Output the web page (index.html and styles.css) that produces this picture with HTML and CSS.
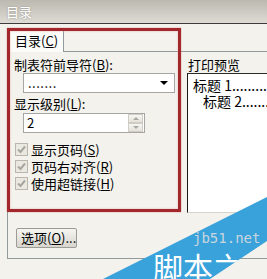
FILE: index.html
```html
<!DOCTYPE html>
<html lang="zh-CN">
<head>
    <meta charset="UTF-8">
    <title>目录</title>
    <link rel="stylesheet" href="styles.css">
</head>
<body>
<div class="window">
    <div class="titlebar">目录</div>
    <div class="client">
        <div class="tabs">
            <div class="tab">目录(<u>C</u>)</div>
            <div class="tabFill"></div>
        </div>
        <div class="panel">
            <div class="columns">
                <div class="left">
                    <div class="label">制表符前导符(<u>B</u>):</div>
                    <div class="combo">
                        <span class="comboText">.......</span>
                        <span class="comboArrow"></span>
                    </div>
                    <div class="label label2">显示级别(<u>L</u>):</div>
                    <div class="spin">
                        <span class="spinText">2</span>
                        <span class="spinBtns">
                            <span class="spinBtn"><i class="up"></i></span>
                            <span class="spinBtn"><i class="down"></i></span>
                        </span>
                    </div>
                    <div class="checks">
                        <div class="check"><span class="box"><svg width="11" height="11" viewBox="0 0 11 11"><path d="M2 5.5 L4.5 8 L9 2.5" fill="none" stroke="#a7a79f" stroke-width="2"/></svg></span>显示页码(<u>S</u>)</div>
                        <div class="check"><span class="box"><svg width="11" height="11" viewBox="0 0 11 11"><path d="M2 5.5 L4.5 8 L9 2.5" fill="none" stroke="#a7a79f" stroke-width="2"/></svg></span>页码右对齐(<u>R</u>)</div>
                        <div class="check"><span class="box"><svg width="11" height="11" viewBox="0 0 11 11"><path d="M2 5.5 L4.5 8 L9 2.5" fill="none" stroke="#a7a79f" stroke-width="2"/></svg></span>使用超链接(<u>H</u>)</div>
                    </div>
                </div>
                <div class="right">
                    <div class="label">打印预览</div>
                    <div class="preview">
                        <div class="lv1">标题 1..........</div>
                        <div class="lv2">标题 2..........</div>
                    </div>
                </div>
            </div>
            <div class="footer">
                <div class="button">选项(<u>O</u>)...</div>
            </div>
        </div>
    </div>
    <!-- 红色标注框 -->
    <div class="highlight"></div>
    <!-- 水印 -->
    <svg class="watermark" width="267" height="279" viewBox="0 0 267 279">
        <defs>
            <clipPath id="band"><polygon points="103,279 267,197 267,241 210,279"/></clipPath>
        </defs>
        <polygon points="103,279 267,197 267,241 210,279" fill="#3aa2da"/>
        <text x="193" y="243" class="wmSite">jb51.net</text>
        <text x="153" y="279" class="wmName" clip-path="url(#band)">脚本之</text>
    </svg>
</div>
</body>
</html>
```

FILE: styles.css
```css
* {
    margin: 0;
    padding: 0;
    box-sizing: border-box;
}
body {
    background-color: #f3f2ed;
    font-family: "Noto Sans CJK SC", "Noto Sans", sans-serif;
    font-size: 13px;
    color: #000;
}
u {
    text-decoration-thickness: 1px;
    text-underline-offset: 1px;
}
.window {
    width: 267px;
    height: 279px;
    overflow: hidden;
    position: relative;
    background-color: #f3f2ed;
}
.titlebar {
    height: 24px;
    line-height: 24px;
    padding-left: 6px;
    font-size: 13px;
    color: #fff;
    text-shadow: 0 0 2px #8c8a84;
    background: linear-gradient(#bcb9b0, #dddbd4);
    border-bottom: 1px solid #3c3c3c;
}
.client {
    padding: 5px 0 0 7px;
}
.tabs {
    display: flex;
    height: 23px;
}
.tab {
    width: 56px;
    margin-left: 1px;
    padding-left: 6px;
    line-height: 21px;
    background-color: #fbfbf9;
    border: 1px solid #919b9c;
    border-bottom: none;
}
.tabFill {
    flex: 1;
    border-bottom: 1px solid #919b9c;
}
.panel {
    height: 207px;
    border-left: 1px solid #919b9c;
    border-bottom: 1px solid #919b9c;
}
.columns {
    display: flex;
}
.left {
    flex-shrink: 0;
    width: 179px;
    padding: 5px 0 0 6px;
}
.label {
    line-height: 15px;
    height: 15px;
    white-space: nowrap;
}
.label2 {
    margin-top: 3px;
}
.combo {
    display: flex;
    align-items: center;
    justify-content: space-between;
    width: 152px;
    height: 20px;
    margin: 1px 0 0 9px;
    padding: 0 6px 0 4px;
    background-color: #fff;
    border: 1px solid #a6a6a6;
}
.comboText {
    letter-spacing: 0.5px;
    line-height: 14px;
}
.comboArrow {
    width: 0;
    height: 0;
    border-left: 4px solid transparent;
    border-right: 4px solid transparent;
    border-top: 4px solid #000;
}
.spin {
    display: flex;
    justify-content: space-between;
    width: 122px;
    height: 20px;
    margin: 2px 0 0 9px;
    padding: 0 1px 0 3px;
    background-color: #fff;
    border: 1px solid #a6a6a6;
}
.spinText {
    line-height: 18px;
}
.spinBtns {
    display: flex;
    flex-direction: column;
    width: 15px;
}
.spinBtn {
    flex: 1;
    display: flex;
    align-items: center;
    justify-content: center;
    background: linear-gradient(#f7f6f2, #e4e2da);
    border: 1px solid #cfcdc4;
}
.spinBtn i {
    width: 0;
    height: 0;
    border-left: 3px solid transparent;
    border-right: 3px solid transparent;
}
.spinBtn .up {
    border-bottom: 3px solid #a9a9a4;
}
.spinBtn .down {
    border-top: 3px solid #a9a9a4;
}
.checks {
    margin-top: 8px;
}
.check {
    display: flex;
    align-items: center;
    height: 17px;
    line-height: 15px;
    padding-left: 1px;
    white-space: nowrap;
}
.box {
    display: flex;
    align-items: center;
    justify-content: center;
    width: 13px;
    height: 13px;
    margin-right: 3px;
    background-color: #e9e8e1;
    border: 1px solid #b9b7ad;
}
.right {
    flex: 1;
    min-width: 0;
    padding-top: 5px;
}
.right .label {
    padding-left: 1px;
}
.preview {
    width: 100px;
    height: 140px;
    margin-top: 1px;
    padding: 3px 0 0 5px;
    background-color: #fff;
    border-top: 1px solid #2a2a2a;
    border-left: 1px solid #1a1a1a;
    border-bottom: 1px solid #d6d4cc;
    font-size: 14px;
    line-height: 16px;
    white-space: nowrap;
    overflow: hidden;
}
.lv2 {
    padding-left: 10px;
}
.footer {
    margin-top: 15px;
    padding-left: 8px;
}
.button {
    width: 61px;
    height: 20px;
    padding-left: 4px;
    line-height: 18px;
    white-space: nowrap;
    overflow: hidden;
    background: linear-gradient(#f6f5f1, #d7d5cd);
    border: 1px solid #9c9b95;
    border-radius: 2px;
}
.highlight {
    position: absolute;
    left: 7px;
    top: 28px;
    width: 174px;
    height: 184px;
    border: 3px solid #a3282c;
    box-shadow: inset 0 0 2px #e6a7a7, 0 0 1px #c46060;
}
.watermark {
    position: absolute;
    left: 0;
    top: 0;
}
.wmSite {
    font-family: "DejaVu Sans Mono", monospace;
    font-size: 14px;
    fill: #c9d5de;
}
.wmName {
    font-family: "Noto Sans CJK SC", sans-serif;
    font-size: 30px;
    fill: #fff;
}
```
